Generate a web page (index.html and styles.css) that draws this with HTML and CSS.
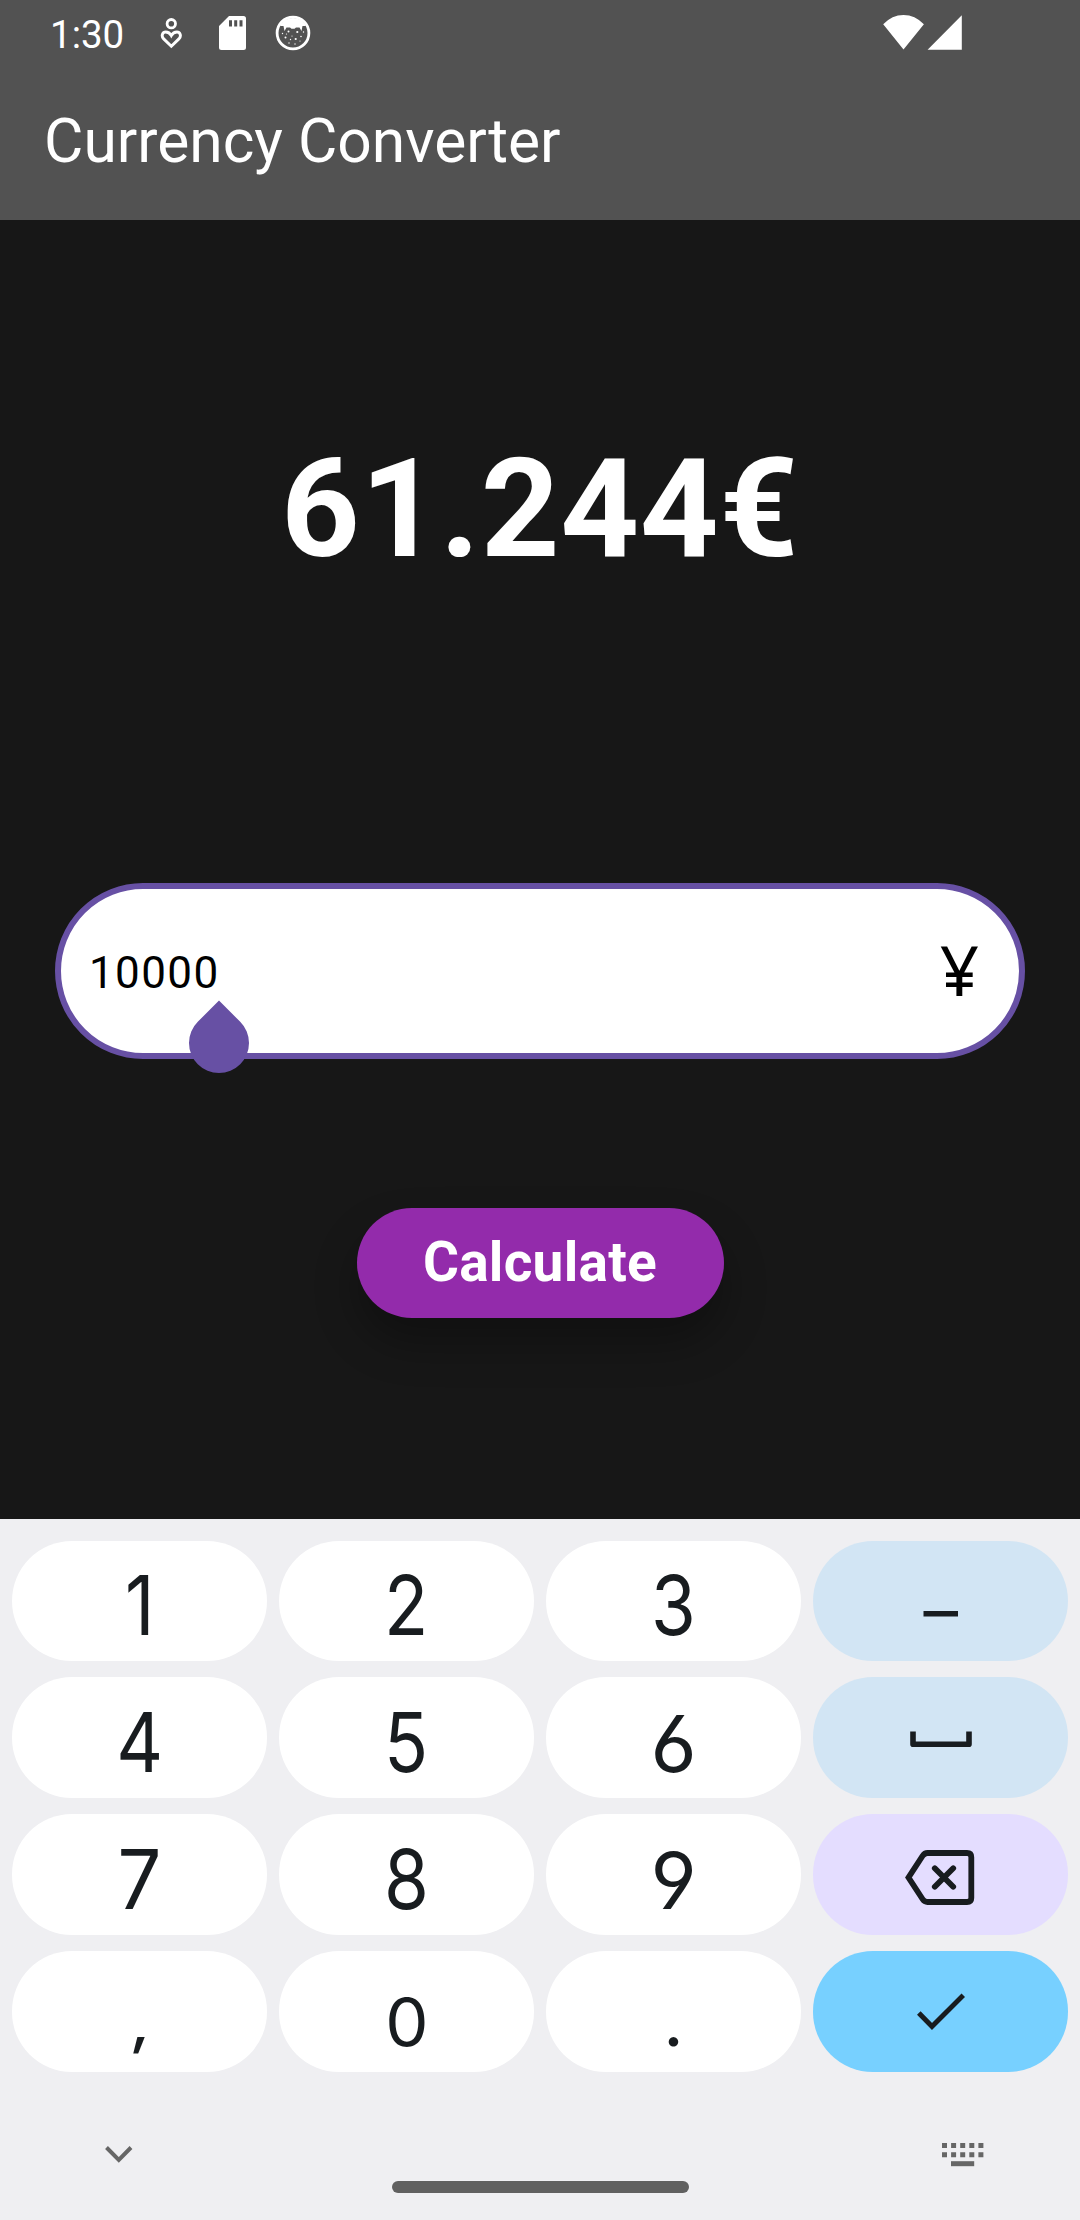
FILE: index.html
```html
<!DOCTYPE html>
<html lang="en">
<head>
<meta charset="utf-8">
<title>Currency Converter</title>
<link rel="stylesheet" href="styles.css">
</head>
<body>
<div class="screen">
  <header class="top">
    <div class="status">
      <span class="clock">1:30</span>
      <svg class="notif" width="24" height="36" viewBox="160 15 24 36">
        <circle cx="171.3" cy="23.7" r="4.2" fill="none" stroke="#fff" stroke-width="2.8"/>
        <path d="M171.3 46.2l-7.6-7.3c-3-3.2-1-6.9 2-6.9 2.6 0 4.4 1.5 5.6 3.6 1.2-2.1 3-3.6 5.6-3.6 3 0 5 3.7 2 6.9z" fill="none" stroke="#fff" stroke-width="2.9"/>
      </svg>
      <svg class="card" width="27" height="34" viewBox="0 0 27 34">
        <path fill-rule="evenodd" fill="#fff" d="M10 0h14.5a2.5 2.5 0 0 1 2.5 2.5v29a2.5 2.5 0 0 1-2.5 2.5h-22a2.5 2.5 0 0 1-2.5-2.5V10zM10 4.200v6.300h3V4.200zM15.200 4.200v6.300h3V4.200zM20.500 4.200v6.300h3V4.200z"/>
      </svg>
      <svg class="debug" width="36" height="36" viewBox="0 0 36 36">
        <circle cx="18" cy="18" r="15.9" fill="none" stroke="#fff" stroke-width="2.8"/>
        <path fill="#fff" d="M5 11Q9 3 18 3t13 8h-3.500l-1 5-2-3.500h-3.500l-1.500 1.200h-3L15 12.500h-3.500l-2 3.500-1-5z"/>
        <g fill="#fff">
          <circle cx="13.500" cy="16.500" r="1"/><circle cx="22.300" cy="17" r="1.100"/><circle cx="10.500" cy="22.500" r="1"/>
          <circle cx="20.700" cy="24" r="1.100"/><circle cx="15.500" cy="24.500" r=".7"/><circle cx="26" cy="21.500" r=".8"/>
          <circle cx="17" cy="21" r=".6"/><circle cx="7.500" cy="18.500" r=".7"/><circle cx="28.500" cy="17" r=".7"/>
          <circle cx="14" cy="28" r=".7"/><circle cx="20" cy="29" r=".7"/><circle cx="25" cy="26" r=".6"/><circle cx="11.500" cy="19" r=".6"/>
        </g>
      </svg>
      <svg class="signal" width="80" height="36" viewBox="883 15 80 36">
        <path fill="#fff" d="M883.200 24.300Q892 15 903.500 15T923.900 24.300L903.500 49.500zM927.600 49.800L961.800 15.300V49.800z"/>
      </svg>
    </div>
    <h1 class="title">Currency Converter</h1>
  </header>

  <main class="main">
    <div class="result">61.244€</div>
    <div class="field">
      <span class="amount">10000</span>
      <span class="yen">¥</span>
      <span class="handle"></span>
    </div>
    <button class="calc">Calculate</button>
  </main>

  <section class="keyboard">
    <div class="keys">
      <div class="key first"><span class="g d1">1</span></div>
      <div class="key first"><span class="g d2">2</span></div>
      <div class="key first"><span class="g d3">3</span></div>
      <div class="key blue icon"><svg width="36" height="120" viewBox="0 0 36 120"><path d="M.5 72.700H35" stroke="#181c1f" stroke-width="5.600"/></svg></div>
      <div class="key"><span class="g d4">4</span></div>
      <div class="key"><span class="g d5">5</span></div>
      <div class="key"><span class="g d6">6</span></div>
      <div class="key blue icon"><svg width="62" height="121" viewBox="0 0 62 121"><path d="M3 54.500V67.200H59V54.500" fill="none" stroke="#181c1f" stroke-width="5.600" stroke-linejoin="round"/></svg></div>
      <div class="key"><span class="g d7">7</span></div>
      <div class="key"><span class="g d8">8</span></div>
      <div class="key"><span class="g d9">9</span></div>
      <div class="key lilac icon"><svg width="71" height="121" viewBox="905 1814 71 121"><g fill="none" stroke="#181c1f" stroke-width="5.800"><path d="M927.500 1853H967Q971.300 1853 971.300 1857.300V1898Q971.300 1902 967 1902H927.500Q924.500 1902 922.500 1899L908.500 1877.500L922.500 1856Q924.500 1853 927.500 1853Z"/><path stroke-linecap="round" d="M934.800 1868.300L953.200 1886.700M953.200 1868.300L934.800 1886.700"/></g></svg></div>
      <div class="key"><span class="g comma">,</span></div>
      <div class="key"><span class="g d0">0</span></div>
      <div class="key"><span class="g dot">.</span></div>
      <div class="key cyan icon"><svg width="48" height="121" viewBox="916.500 1951 48 121"><path d="M918.300 2013L931.500 2026.500L962.800 1995.200" fill="none" stroke="#181c1f" stroke-width="5"/></svg></div>
    </div>
    <div class="tools">
      <svg width="28" height="18" viewBox="0 0 28 18"><path d="M1.500 1.500L13.800 13.800L26 1.500" fill="none" stroke="#666" stroke-width="4"/></svg>
      <svg width="42" height="24" viewBox="0 0 42 24"><g fill="none" stroke="#666" stroke-width="5"><path stroke-dasharray="5 4.100" d="M0 2.500H42M0 11.800H42"/><path d="M9 20.700H32.200"/></g></svg>
    </div>
    <div class="pill"></div>
  </section>
</div>
</body>
</html>
```
FILE: styles.css
```css
* { box-sizing: border-box; }

body {
  margin: 0;
  background: #171717;
  font-family: Roboto, sans-serif;
}

.screen {
  display: flex;
  flex-direction: column;
  width: 1080px;
  height: 2220px;
  overflow: hidden;
}

.top {
  height: 220px;
  background: #525252;
  color: #fff;
}

.status {
  display: flex;
  align-items: flex-start;
  height: 68px;
  padding: 15px 117px 0 50px;
}

.clock {
  width: 110px;
  margin-top: -3px;
  font-size: 38.5px;
  line-height: 45px;
}

.status svg { flex: none; }
.status .card { margin: 1px 0 0 35px; }
.status .debug { margin-left: 29px; }
.status .signal { margin-left: auto; }

.title {
  margin: 0;
  padding: 38px 44px 0;
  font-size: 60.5px;
  font-weight: 400;
  line-height: 72px;
}

.main {
  display: flex;
  flex-direction: column;
  align-items: center;
  height: 1299px;
  padding-top: 209px;
  background: #171717;
}

.result {
  height: 160px;
  color: #fff;
  font-size: 137.5px;
  font-weight: 700;
  line-height: 160px;
  letter-spacing: 0.7px;
}

.field {
  position: relative;
  display: flex;
  align-items: center;
  justify-content: space-between;
  width: 970px;
  height: 176px;
  margin-top: 294px;
  padding: 0 40px 0 28px;
  border: 6px solid #6750a4;
  border-radius: 88px;
  background: #fff;
  color: #000;
}

.amount {
  padding-top: 3px;
  font-size: 44px;
  letter-spacing: 1.375px;
}

.yen {
  padding-bottom: 3px;
  font-family: "Noto Sans", sans-serif;
  font-size: 68.75px;
  line-height: 100px;
}

.handle {
  position: absolute;
  left: 128px;
  top: 124px;
  width: 60px;
  height: 60px;
  border-radius: 0 50% 50% 50%;
  background: #6750a4;
  transform: rotate(45deg);
}

.calc {
  width: 367px;
  height: 110px;
  margin-top: 149px;
  padding: 0 0 2px;
  border: 0;
  border-radius: 55px;
  background: #932bab;
  box-shadow: 0 24px 44px rgba(0, 0, 0, 0.3);
  color: #fff;
  font: 700 55px/1 Roboto, sans-serif;
  letter-spacing: 0.275px;
}

.keyboard {
  height: 701px;
  padding: 22px 12px 0;
  background: #efeff2;
}

.keys {
  display: grid;
  grid-template-columns: repeat(4, 255px);
  grid-template-rows: 120px 121px 121px 121px;
  gap: 16px 12px;
}

.key {
  display: flex;
  align-items: baseline;
  justify-content: center;
  border-radius: 60px;
  background: #fff;
  color: #181c1f;
  font-family: Inter, sans-serif;
  font-size: 82.5px;
  line-height: 1;
  font-feature-settings: "cv03", "cv04";
}

/* strut that fixes the label baseline inside every key */
.key::before {
  content: "";
  width: 0;
  height: 95px;
}

.key.first::before { height: 94px; }

.key.icon { align-items: flex-start; }
.key.icon::before { content: none; }

.blue { background: #d2e5f4; }
.lilac { background: #e4ddff; }
.cyan { background: #77d0ff; }

.g { transform: scaleX(0.88); }
.d7 { transform: scaleX(0.94); }
.d6, .d9 { font-size: 78px; transform: scaleX(1.02); }
.d0 { font-size: 66px; transform: scaleX(1.04); }
.comma { font-size: 56px; font-weight: 600; transform: translate(2px, -3px) skewX(-6deg); }
.dot { font-family: Lato, sans-serif; font-size: 76px; transform: none; }

.tools {
  display: flex;
  justify-content: space-between;
  align-items: center;
  height: 24px;
  margin-top: 71px;
  padding: 0 84px 0 92.5px;
}

.pill {
  width: 297px;
  height: 12px;
  margin: 14px auto 0;
  border-radius: 6px;
  background: #606060;
}
```
